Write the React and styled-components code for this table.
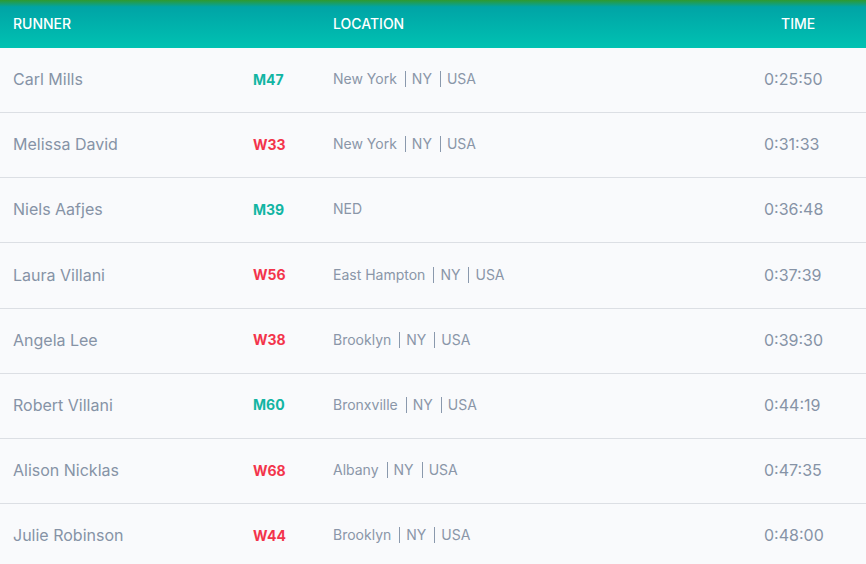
import React from "react";
import styled, { createGlobalStyle } from "styled-components";

const Global = createGlobalStyle`
  html, body { margin: 0; padding: 0; background: #f9fafc; }
  body { font-family: Inter, "Noto Sans", sans-serif; -webkit-font-smoothing: antialiased; }
`;

const Table = styled.div`
  width: 866px;
  display: flex;
  flex-direction: column;
`;

const cols = `240px 80px 431px 1fr`;

const Header = styled.div`
  display: grid;
  grid-template-columns: ${cols};
  align-items: center;
  height: 48px;
  padding-left: 13px;
  padding-bottom: 1px;
  box-sizing: border-box;
  background: linear-gradient(180deg, #2f9a2f 0px, #00a4a6 7px, #00c2b2 48px);
  color: #ffffff;
  font-size: 14px;
  font-weight: 500;
`;

const HeadCell = styled.div`
  padding-left: ${(p) => p.$pad || 0}px;
`;

const Row = styled.div`
  display: grid;
  grid-template-columns: ${cols};
  align-items: center;
  box-sizing: border-box;
  height: 65.17px;
  padding-left: 13px;
  padding-bottom: 2px;
  border-bottom: 1px solid #dcdfe4;
  background: #f9fafc;
`;

const Name = styled.div`
  font-size: 16px;
  color: #8693a6;
`;

const Tag = styled.div`
  font-size: 14px;
  font-weight: 700;
  color: ${(p) => (p.$w ? "#f3344b" : "#12b5a3")};
`;

const Location = styled.div`
  display: flex;
  align-items: center;
  font-size: 14px;
  color: #8a96a8;
`;

const LocPart = styled.span`
  line-height: 16px;
  & + & {
    margin-left: 8px;
    padding-left: 6px;
    border-left: 1px solid #8a99ad;
  }
`;

const Time = styled.div`
  font-size: 16px;
  color: #8693a6;
`;

const data = [
  ["Carl Mills", "M47", ["New York", "NY", "USA"], "0:25:50"],
  ["Melissa David", "W33", ["New York", "NY", "USA"], "0:31:33"],
  ["Niels Aafjes", "M39", ["NED"], "0:36:48"],
  ["Laura Villani", "W56", ["East Hampton", "NY", "USA"], "0:37:39"],
  ["Angela Lee", "W38", ["Brooklyn", "NY", "USA"], "0:39:30"],
  ["Robert Villani", "M60", ["Bronxville", "NY", "USA"], "0:44:19"],
  ["Alison Nicklas", "W68", ["Albany", "NY", "USA"], "0:47:35"],
  ["Julie Robinson", "W44", ["Brooklyn", "NY", "USA"], "0:48:00"],
];

export default function App() {
  return (
    <>
      <Global />
      <Table>
        <Header>
          <HeadCell>RUNNER</HeadCell>
          <HeadCell />
          <HeadCell>LOCATION</HeadCell>
          <HeadCell $pad={17}>TIME</HeadCell>
        </Header>
        {data.map(([name, tag, loc, time]) => (
          <Row key={name}>
            <Name>{name}</Name>
            <Tag $w={tag.startsWith("W")}>{tag}</Tag>
            <Location>
              {loc.map((l) => (
                <LocPart key={l}>{l}</LocPart>
              ))}
            </Location>
            <Time>{time}</Time>
          </Row>
        ))}
      </Table>
    </>
  );
}
